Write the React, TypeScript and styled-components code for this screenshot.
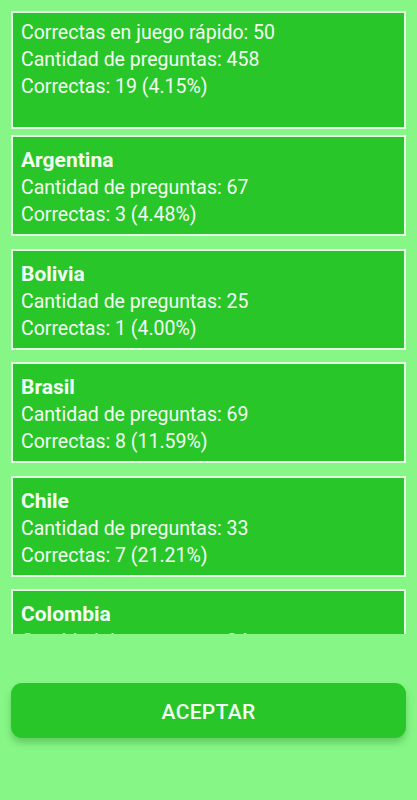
import styled, { createGlobalStyle } from "styled-components";

const GlobalStyle = createGlobalStyle`
  html, body {
    margin: 0;
    padding: 0;
    background: #86f786;
  }
  * {
    box-sizing: border-box;
  }
`;

const Page = styled.div`
  width: 417px;
  height: 800px;
  display: flex;
  flex-direction: column;
  background: #86f786;
  font-family: Roboto, "Liberation Sans", sans-serif;
  color: #f2fff2;
`;

const List = styled.div`
  height: 634px;
  overflow: hidden;
  padding: 11px 11px 0;
  display: flex;
  flex-direction: column;
`;

const Card = styled.div<{ first?: boolean }>`
  flex-shrink: 0;
  background: #29c629;
  border: 2px solid #e4fbe4;
  padding: ${(p) => (p.first ? "6px 8px 0" : "10px 8px 6px")};
  margin-bottom: ${(p) => (p.first ? "6px" : "12.5px")};
`;

const Line = styled.div`
  font-size: 19.5px;
  line-height: 27px;
  height: 27px;
  white-space: nowrap;
`;

const Title = styled(Line)`
  font-size: 21px;
  font-weight: 700;
`;

const Footer = styled.div`
  padding: 49px 11px 0;
`;

const Button = styled.button`
  width: 100%;
  height: 55px;
  padding-top: 3px;
  border: none;
  border-radius: 11px;
  background: #29c629;
  color: #f2fff2;
  font-family: Roboto, "Liberation Sans", sans-serif;
  font-size: 21px;
  font-weight: 500;
  letter-spacing: 0.3px;
  box-shadow: 0 5px 7px rgba(0, 80, 0, 0.25);
  cursor: pointer;
`;

const countries = [
  { name: "Argentina", total: 67, ok: 3 },
  { name: "Bolivia", total: 25, ok: 1 },
  { name: "Brasil", total: 69, ok: 8 },
  { name: "Chile", total: 33, ok: 7 },
  { name: "Colombia", total: 34, ok: 5 },
];

const pct = (ok: number, total: number) => ((ok / total) * 100).toFixed(2);

function App() {
  return (
    <>
      <GlobalStyle />
      <Page>
        <List>
          <Card first>
            <Line>Correctas en juego rápido: 50</Line>
            <Line>Cantidad de preguntas: 458</Line>
            <Line>Correctas: 19 (4.15%)</Line>
            <Line />
          </Card>
          {countries.map((c) => (
            <Card key={c.name}>
              <Title>{c.name}</Title>
              <Line>Cantidad de preguntas: {c.total}</Line>
              <Line>
                Correctas: {c.ok} ({pct(c.ok, c.total)}%)
              </Line>
            </Card>
          ))}
        </List>
        <Footer>
          <Button>ACEPTAR</Button>
        </Footer>
      </Page>
    </>
  );
}

export default App;
